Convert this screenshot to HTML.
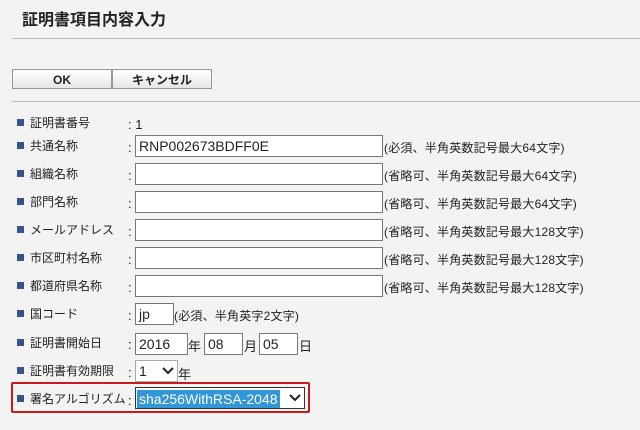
<!DOCTYPE html>
<html><head><meta charset="utf-8"><style>
body{margin:0;width:640px;height:430px;background:#f3f3f3;font-family:"Liberation Sans","Noto Sans CJK JP",sans-serif;font-size:12px;color:#222;position:relative;overflow:hidden}
.a{position:absolute;white-space:nowrap}
.c{position:absolute;left:128px;white-space:nowrap;font-size:13px;margin-top:3px}
.n{position:absolute;white-space:nowrap;font-size:12px;letter-spacing:0.2px}
h1{position:absolute;left:22px;top:6px;margin:0;font-size:16px;font-weight:bold;color:#222}
.hr{position:absolute;left:12px;right:0;height:1px;background:#bbb}
.btn{position:absolute;top:69px;height:20px;border:1px solid #999;background:linear-gradient(#fff,#e6e6e6);font-weight:bold;font-size:12px;text-align:center;line-height:20px;box-sizing:border-box}
.b{position:absolute;left:17px;width:7px;height:7px;background:#34558b}
.in{position:absolute;height:22px;border:1px solid #777;background:#fff;box-sizing:border-box;font-size:14px;line-height:20px;padding-left:3px}
</style></head><body>
<h1>証明書項目内容入力</h1>
<div class="hr" style="top:38px"></div>
<div class="btn" style="left:12px;width:100px">OK</div>
<div class="btn" style="left:112px;width:100px">キャンセル</div>
<div class="hr" style="top:101px"></div>

<div class="b" style="top:119px"></div><div class="a" style="left:30px;top:114px">証明書番号</div><div class="c" style="top:114px">: 1</div>

<div class="b" style="top:142px"></div><div class="a" style="left:30px;top:137px">共通名称</div><div class="c" style="top:137px">:</div>
<div class="in" style="left:135px;top:135px;width:248px">RNP002673BDFF0E</div><div class="n" style="left:384px;top:139px">(必須、半角英数記号最大64文字)</div>

<div class="b" style="top:170px"></div><div class="a" style="left:30px;top:165px">組織名称</div><div class="c" style="top:165px">:</div>
<div class="in" style="left:135px;top:163px;width:248px"></div><div class="n" style="left:384px;top:167px">(省略可、半角英数記号最大64文字)</div>

<div class="b" style="top:198px"></div><div class="a" style="left:30px;top:193px">部門名称</div><div class="c" style="top:193px">:</div>
<div class="in" style="left:135px;top:191px;width:248px"></div><div class="n" style="left:384px;top:195px">(省略可、半角英数記号最大64文字)</div>

<div class="b" style="top:226px"></div><div class="a" style="left:30px;top:221px">メールアドレス</div><div class="c" style="top:221px">:</div>
<div class="in" style="left:135px;top:219px;width:248px"></div><div class="n" style="left:384px;top:223px">(省略可、半角英数記号最大128文字)</div>

<div class="b" style="top:254px"></div><div class="a" style="left:30px;top:249px">市区町村名称</div><div class="c" style="top:249px">:</div>
<div class="in" style="left:135px;top:247px;width:248px"></div><div class="n" style="left:384px;top:251px">(省略可、半角英数記号最大128文字)</div>

<div class="b" style="top:282px"></div><div class="a" style="left:30px;top:277px">都道府県名称</div><div class="c" style="top:277px">:</div>
<div class="in" style="left:135px;top:275px;width:248px"></div><div class="n" style="left:384px;top:279px">(省略可、半角英数記号最大128文字)</div>

<div class="b" style="top:310px"></div><div class="a" style="left:30px;top:305px">国コード</div><div class="c" style="top:305px">:</div>
<div class="in" style="left:135px;top:303px;width:39px">jp</div><div class="n" style="left:174px;top:307px">(必須、半角英字2文字)</div>

<div class="b" style="top:339px"></div><div class="a" style="left:30px;top:334px">証明書開始日</div><div class="c" style="top:334px">:</div>
<div class="in" style="left:135px;top:333px;width:53px">2016</div><div class="a" style="left:188px;top:336px;font-size:13px">年</div>
<div class="in" style="left:204px;top:333px;width:39px">08</div><div class="a" style="left:244px;top:336px;font-size:13px">月</div>
<div class="in" style="left:259px;top:333px;width:39px">05</div><div class="a" style="left:299px;top:336px;font-size:13px">日</div>

<div class="b" style="top:367px"></div><div class="a" style="left:30px;top:362px">証明書有効期限</div><div class="c" style="top:362px">:</div>
<div class="in" style="left:135px;top:360px;width:43px;border-color:#aaa">1<svg style="position:absolute;right:3px;top:6px" width="12" height="8" viewBox="0 0 12 8"><path d="M1 1 L6 6 L11 1" stroke="#222" stroke-width="2" fill="none"/></svg></div><div class="a" style="left:178px;top:364px;font-size:13px">年</div>

<div style="position:absolute;left:11px;top:382px;width:299px;height:31px;border:2px solid #c81a1a;box-sizing:border-box;border-radius:2px"></div>
<div class="b" style="top:395px"></div><div class="a" style="left:30px;top:390px">署名アルゴリズム</div><div class="c" style="top:390px">:</div>
<div class="in" style="left:135px;top:387px;width:170px;border-color:#333;padding:1px"><span style="display:inline-block;background:#3297d8;color:#fff;height:18px;line-height:18px;padding:0 2px;font-size:14px">sha256WithRSA-2048</span><svg style="position:absolute;right:3px;top:6px" width="12" height="8" viewBox="0 0 12 8"><path d="M1 1 L6 6 L11 1" stroke="#222" stroke-width="2" fill="none"/></svg></div>
</body></html>
